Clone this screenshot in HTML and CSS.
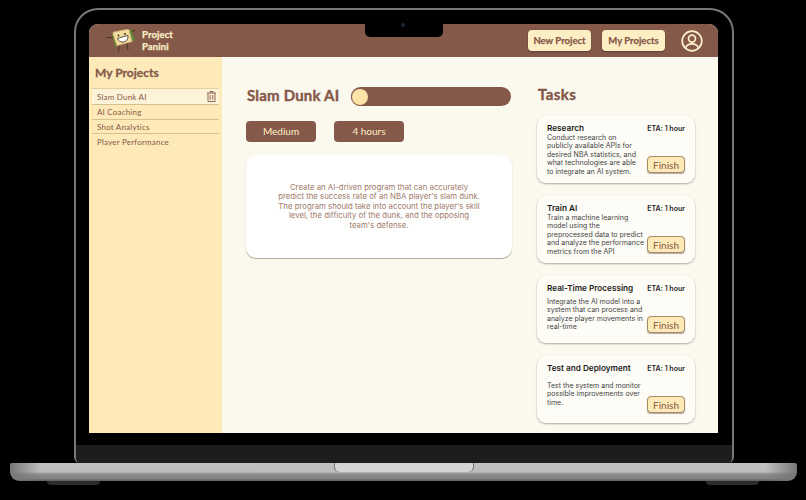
FILE: index.html
```html
<!DOCTYPE html>
<html lang="en">
<head>
    <meta charset="UTF-8">
    <title>Project Panini</title>
    <link rel="stylesheet" href="styles.css">
</head>
<body>
    <div class="laptop">
        <div class="lid">
            <div class="screen">
                <div class="notch"><span class="camera"></span></div>
                <header class="topbar">
                    <div class="brand">
                        <svg class="logo" width="30" height="28" viewBox="0 0 30 28">
                            <path d="M0 10.5 H7 M25 5 L29 3 M13 19 L12.5 25 M21 17 L22 23" stroke="#4a3a22" stroke-width="1.1" fill="none"/>
                            <path d="M6 8 L9.5 20 L12 19 L8 6 Z" fill="#5f8a35"/>
                            <path d="M21 3 L25 2 L29 13 L26 15 Z" fill="#5f8a35"/>
                            <path d="M7 7 Q6.5 5 9 4.800 L21 2.500 Q24 2.500 23.500 5 L26 14.500 L11 18.500 Z" fill="#f3dca0" stroke="#d9b476" stroke-width="0.8"/>
                            <circle cx="12.500" cy="8.500" r="0.900" fill="#3a2a1a"/>
                            <circle cx="19" cy="7" r="0.900" fill="#3a2a1a"/>
                            <path d="M11.500 11.500 Q17 9.500 22 8.500 Q22.500 14 17.500 15 Q13 15.500 11.500 11.500 Z" fill="#fff" stroke="#3a2a1a" stroke-width="0.8"/>
                        </svg>
                        <span class="brand-name">Project<br>Panini</span>
                    </div>
                    <nav class="nav">
                        <a class="nav-btn btn-new">New Project</a>
                        <a class="nav-btn btn-mine">My Projects</a>
                        <svg class="avatar" width="22" height="22" viewBox="0 0 22 22" fill="none" stroke="#fdf0c8" stroke-width="1.7">
                            <circle cx="11" cy="11" r="9.8"/>
                            <circle cx="11" cy="8.600" r="3.500"/>
                            <path d="M4.400 18 Q6 13.800 11 13.800 Q16 13.800 17.600 18"/>
                        </svg>
                    </nav>
                </header>
                <div class="content">
                    <aside class="sidebar">
                        <h2 class="side-title">My Projects</h2>
                        <ul class="project-list">
                            <li class="project active">Slam Dunk AI
                                <svg width="9" height="11" viewBox="0 0 9 11" fill="none" stroke="#85594a" stroke-width="0.9">
                                    <path d="M0 2 H9 M3 2 V.5 H6 V2 M1 2 V10.500 H8 V2 M3.200 4 V8.800 M5.800 4 V8.800"/>
                                </svg>
                            </li>
                            <li class="project">AI Coaching</li>
                            <li class="project">Shot Analytics</li>
                            <li class="project last">Player Performance</li>
                        </ul>
                    </aside>
                    <main class="main">
                        <div class="title-row">
                            <h1 class="project-title">Slam Dunk AI</h1>
                            <div class="progress"><span class="knob"></span></div>
                        </div>
                        <div class="tags">
                            <span class="tag">Medium</span>
                            <span class="tag">4 hours</span>
                        </div>
                        <div class="desc">
                            <p>Create an AI-driven program that can accurately predict the success rate of an NBA player's slam dunk. The program should take into account the player's skill level, the difficulty of the dunk, and the opposing team's defense.</p>
                        </div>
                    </main>
                    <section class="tasks">
                        <h2 class="tasks-title">Tasks</h2>
                        <div class="task">
                            <div class="task-head"><h3>Research</h3><span class="eta">ETA: 1 hour</span></div>
                            <div class="task-body">
                                <p>Conduct research on publicly available APIs for desired NBA statistics, and what technologies are able to integrate an AI system.</p>
                                <button class="finish">Finish</button>
                            </div>
                        </div>
                        <div class="task">
                            <div class="task-head"><h3>Train AI</h3><span class="eta">ETA: 1 hour</span></div>
                            <div class="task-body">
                                <p>Train a machine learning model using the preprocessed data to predict and analyze the performance metrics from the API</p>
                                <button class="finish">Finish</button>
                            </div>
                        </div>
                        <div class="task">
                            <div class="task-head"><h3>Real-Time Processing</h3><span class="eta">ETA: 1 hour</span></div>
                            <div class="task-body gap">
                                <p>Integrate the AI model into a system that can process and analyze player movements in real-time</p>
                                <button class="finish">Finish</button>
                            </div>
                        </div>
                        <div class="task">
                            <div class="task-head"><h3>Test and Deployment</h3><span class="eta">ETA: 1 hour</span></div>
                            <div class="task-body gap-lg">
                                <p>Test the system and monitor possible improvements over time.</p>
                                <button class="finish">Finish</button>
                            </div>
                        </div>
                    </section>
                </div>
            </div>
            <div class="hinge"></div>
        </div>
        <div class="base"><span class="thumb"></span></div>
        <div class="feet"><span class="foot"></span><span class="foot"></span></div>
    </div>
</body>
</html>
```

FILE: styles.css
```css
* {
    box-sizing: border-box;
}
body {
    margin: 0;
    background-color: #000;
    font-family: Inter, Arial, sans-serif;
    overflow: hidden;
}
h1, h2, h3, p, ul {
    margin: 0;
    padding: 0;
}
.laptop {
    width: 806px;
    height: 500px;
    padding-top: 8px;
}
.lid {
    width: 660px;
    height: 455px;
    margin-left: 74px;
    padding: 14px 14px 0 13px;
    border: 2px solid #77777b;
    border-bottom: none;
    border-radius: 24px 24px 6px 6px;
    display: flex;
    flex-direction: column;
    position: relative;
}
.screen {
    width: 629px;
    height: 409px;
    background-color: #fbf8ee;
    display: flex;
    flex-direction: column;
    border-radius: 9px 9px 0 0;
    overflow: hidden;
}
.notch {
    position: absolute;
    top: 14px;
    left: 289px;
    width: 78px;
    height: 13px;
    background-color: #000;
    border-radius: 0 0 5px 5px;
}
.camera {
    position: absolute;
    top: -1px;
    left: 36px;
    width: 4px;
    height: 4px;
    border-radius: 50%;
    background-color: #1c2838;
}
.hinge {
    height: 18px;
    margin: 12px -14px 0 -13px;
    background-color: #1d1d1e;
    border-radius: 0 0 5px 5px;
}
.topbar {
    height: 33px;
    flex-shrink: 0;
    background-color: #85594a;
    display: flex;
    justify-content: space-between;
    align-items: center;
    padding: 0 15px 0 17px;
}
.brand {
    display: flex;
    align-items: center;
    gap: 6px;
}
.brand-name {
    font-family: Lato, sans-serif;
    font-weight: 700;
    font-size: 9.5px;
    line-height: 12px;
    letter-spacing: 0.1px;
    -webkit-text-stroke: 0.25px #fdf0c8;
    color: #fdf0c8;
}
.nav {
    display: flex;
    align-items: center;
}
.nav-btn {
    height: 21px;
    width: 63px;
    display: flex;
    align-items: center;
    justify-content: center;
    background-color: #fdeec4;
    color: #85594a;
    font-family: Lato, sans-serif;
    font-weight: 700;
    font-size: 9.5px;
    -webkit-text-stroke: 0.25px #85594a;
    border-radius: 4px;
    box-shadow: 0 1px 2px rgba(0, 0, 0, 0.3);
}
.btn-new {
    margin-right: 11px;
}
.btn-mine {
    margin-right: 16px;
}
.content {
    flex: 1;
    display: flex;
}
.sidebar {
    width: 133px;
    background-color: #fee9b8;
    padding: 8px 3px 0 3px;
}
.side-title {
    font-family: Lato, sans-serif;
    font-weight: 700;
    font-size: 12px;
    line-height: 15px;
    -webkit-text-stroke: 0.3px #85594a;
    color: #85594a;
    padding-left: 3px;
    margin-bottom: 8px;
}
.project-list {
    list-style: none;
}
.project {
    height: 14.5px;
    display: flex;
    align-items: center;
    justify-content: space-between;
    padding: 1px 3px 0 5px;
    font-family: Lato, sans-serif;
    font-size: 8px;
    letter-spacing: 0.2px;
    color: #85594a;
    border-bottom: 1px solid #d9c092;
}
.project.active {
    height: 17px;
    padding-top: 0;
    background-color: #fdf3d8;
    border-top: 1px solid #e3cfa2;
}
.project.last {
    border-bottom: none;
}
.main {
    width: 289px;
    padding: 30px 0 0 24px;
}
.title-row {
    display: flex;
    align-items: center;
    height: 19px;
    gap: 12px;
}
.project-title {
    font-family: Lato, sans-serif;
    font-weight: 700;
    font-size: 15px;
    line-height: 16px;
    letter-spacing: 0.2px;
    -webkit-text-stroke: 0.4px #85594a;
    color: #85594a;
    white-space: nowrap;
    margin: -3px 0 0 1px;
}
.progress {
    width: 161px;
    height: 19px;
    border-radius: 10px;
    background-color: #85594a;
    display: flex;
    align-items: center;
}
.knob {
    display: block;
    width: 18px;
    height: 18px;
    border-radius: 50%;
    background-color: #fee4a8;
    border: 1px solid #85594a;
}
.tags {
    display: flex;
    gap: 18px;
    margin-top: 15px;
}
.tag {
    width: 70px;
    height: 21px;
    padding-bottom: 1px;
    display: flex;
    align-items: center;
    justify-content: center;
    background-color: #85594a;
    color: #fdeec4;
    font-family: Lato, sans-serif;
    font-size: 10px;
    border-radius: 4px;
}
.desc {
    width: 266px;
    height: 103px;
    margin-top: 13px;
    background-color: #fff;
    border-radius: 10px;
    box-shadow: 0 1px 1px rgba(90, 70, 50, 0.45);
    display: flex;
    align-items: center;
    justify-content: center;
    padding: 0 31px;
}
.desc p {
    font-size: 7.8px;
    line-height: 9.4px;
    text-align: center;
    color: #a07a6b;
}
.tasks {
    width: 207px;
    padding: 28px 0 0 26px;
}
.tasks-title {
    font-family: Lato, sans-serif;
    font-weight: 700;
    font-size: 15px;
    line-height: 19px;
    letter-spacing: 0.4px;
    -webkit-text-stroke: 0.4px #85594a;
    color: #85594a;
    margin: 0 0 12px 1px;
}
.task {
    width: 158px;
    height: 67px;
    margin-bottom: 13px;
    padding: 7px 10px 10px 10px;
    background-color: #fdfcf7;
    border-radius: 9px;
    box-shadow: 0 1px 2px rgba(60, 50, 40, 0.4);
    display: flex;
    flex-direction: column;
}
.task-head {
    display: flex;
    justify-content: space-between;
    align-items: center;
    height: 10px;
}
.task-head h3 {
    font-size: 8.2px;
    font-weight: 600;
    color: #1c1c1c;
}
.eta {
    font-size: 7px;
    font-weight: 600;
    color: #1c1c1c;
}
.task-body {
    flex: 1;
    min-height: 0;
    display: flex;
    justify-content: space-between;
    margin-top: 1px;
}
.task-body.gap {
    margin-top: 5px;
}
.task-body.gap-lg {
    margin-top: 9px;
}
.task-body p {
    width: 97px;
    font-size: 7px;
    line-height: 8.4px;
    color: #444;
}
.finish {
    width: 38px;
    height: 17px;
    padding: 0;
    align-self: flex-end;
    background-color: #fee9b8;
    border: 1px solid #a98a66;
    border-radius: 4px;
    color: #85594a;
    font-family: Lato, sans-serif;
    font-size: 10px;
    box-shadow: 0 1px 1px rgba(60, 50, 40, 0.4);
    flex-shrink: 0;
}
.base {
    width: 787px;
    height: 18px;
    margin-left: 10px;
    border-radius: 2px 2px 9px 9px;
    background:
        linear-gradient(90deg, #77777a 0, rgba(120, 120, 122, 0) 4%, rgba(120, 120, 122, 0) 96%, #77777a 100%),
        linear-gradient(#c0c0c3 0, #bcbcbe 50%, #8d8d90 62%, #838386 85%, #5f5f62 100%);
    display: flex;
    justify-content: center;
}
.thumb {
    width: 138px;
    height: 9px;
    background-color: #d4d4d6;
    border-radius: 0 0 5px 5px;
    box-shadow: -1px 0 0 #777, 1px 0 0 #777;
}
.feet {
    display: flex;
    justify-content: space-between;
    padding: 0 47px;
}
.foot {
    width: 53px;
    height: 4px;
    background-color: #2c2c2e;
    border-radius: 0 0 6px 6px;
}
```
